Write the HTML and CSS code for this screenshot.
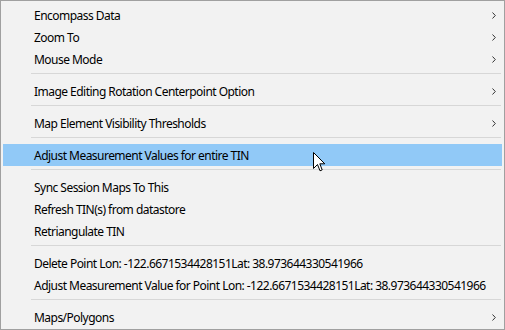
FILE: index.html
```html
<!DOCTYPE html>
<html>
<head>
<meta charset="utf-8">
<link rel="stylesheet" href="styles.css">
</head>
<body>
<div class="menu">
  <div class="item"><span class="label">Encompass Data</span><svg class="arrow" width="4" height="7" viewBox="0 0 4 7"><path d="M0.5 0.5 L3.3 3.5 L0.5 6.5" fill="none" stroke="#333" stroke-width="1"/></svg></div>
  <div class="item"><span class="label">Zoom To</span><svg class="arrow" width="4" height="7" viewBox="0 0 4 7"><path d="M0.5 0.5 L3.3 3.5 L0.5 6.5" fill="none" stroke="#333" stroke-width="1"/></svg></div>
  <div class="item"><span class="label">Mouse Mode</span><svg class="arrow" width="4" height="7" viewBox="0 0 4 7"><path d="M0.5 0.5 L3.3 3.5 L0.5 6.5" fill="none" stroke="#333" stroke-width="1"/></svg></div>
  <div class="sep"></div>
  <div class="item"><span class="label">Image Editing Rotation Centerpoint Option</span><svg class="arrow" width="4" height="7" viewBox="0 0 4 7"><path d="M0.5 0.5 L3.3 3.5 L0.5 6.5" fill="none" stroke="#333" stroke-width="1"/></svg></div>
  <div class="sep"></div>
  <div class="item"><span class="label">Map Element Visibility Thresholds</span><svg class="arrow" width="4" height="7" viewBox="0 0 4 7"><path d="M0.5 0.5 L3.3 3.5 L0.5 6.5" fill="none" stroke="#333" stroke-width="1"/></svg></div>
  <div class="sep"></div>
  <div class="item active"><span class="label">Adjust Measurement Values for entire TIN</span>
    <svg class="cursor" width="13" height="21" viewBox="0 0 13 21"><path d="M0.5 0.5 L0.5 16.5 L4.5 12.5 L7 18.8 L9.2 17.9 L6.8 11.8 L11.8 11.8 Z" fill="#fff" stroke="#000" stroke-width="1" stroke-linejoin="miter"/></svg>
  </div>
  <div class="sep"></div>
  <div class="item"><span class="label">Sync Session Maps To This</span></div>
  <div class="item"><span class="label">Refresh TIN(s) from datastore</span></div>
  <div class="item"><span class="label">Retriangulate TIN</span></div>
  <div class="sep"></div>
  <div class="item"><span class="label">Delete Point Lon: -122.6671534428151Lat: 38.973644330541966</span></div>
  <div class="item"><span class="label">Adjust Measurement Value for Point Lon: -122.6671534428151Lat: 38.973644330541966</span></div>
  <div class="sep"></div>
  <div class="item"><span class="label">Maps/Polygons</span><svg class="arrow" width="4" height="7" viewBox="0 0 4 7"><path d="M0.5 0.5 L3.3 3.5 L0.5 6.5" fill="none" stroke="#333" stroke-width="1"/></svg></div>
</div>
</body>
</html>
```
FILE: styles.css
```css
html, body {
  margin: 0;
  padding: 0;
  background: #f2f2f2;
}
.menu {
  box-sizing: border-box;
  width: 505px;
  height: 330px;
  border: 1px solid #a0a0a0;
  background: #f2f2f2;
  padding: 3px 2px 1px 2px;
  display: flex;
  flex-direction: column;
  font-family: "Segoe UI", "Noto Sans", "Open Sans", sans-serif;
  font-size: 12px;
  letter-spacing: -0.53px;
  color: #000;
}
.item {
  position: relative;
  height: 22px;
  flex: 0 0 22px;
  display: flex;
  align-items: center;
  padding-left: 31px;
  padding-right: 3px;
}
.label {
  flex: 1;
  white-space: nowrap;
}
.arrow {
  display: block;
  margin-right: 3px;
}
.item.active {
  background: #91c9f7;
}
.sep {
  flex: 0 0 1px;
  height: 1px;
  background: #d7d7d7;
  margin: 3px 1px 6px 28px;
}
.cursor {
  position: absolute;
  left: 310px;
  top: 8px;
  z-index: 2;
}
```
